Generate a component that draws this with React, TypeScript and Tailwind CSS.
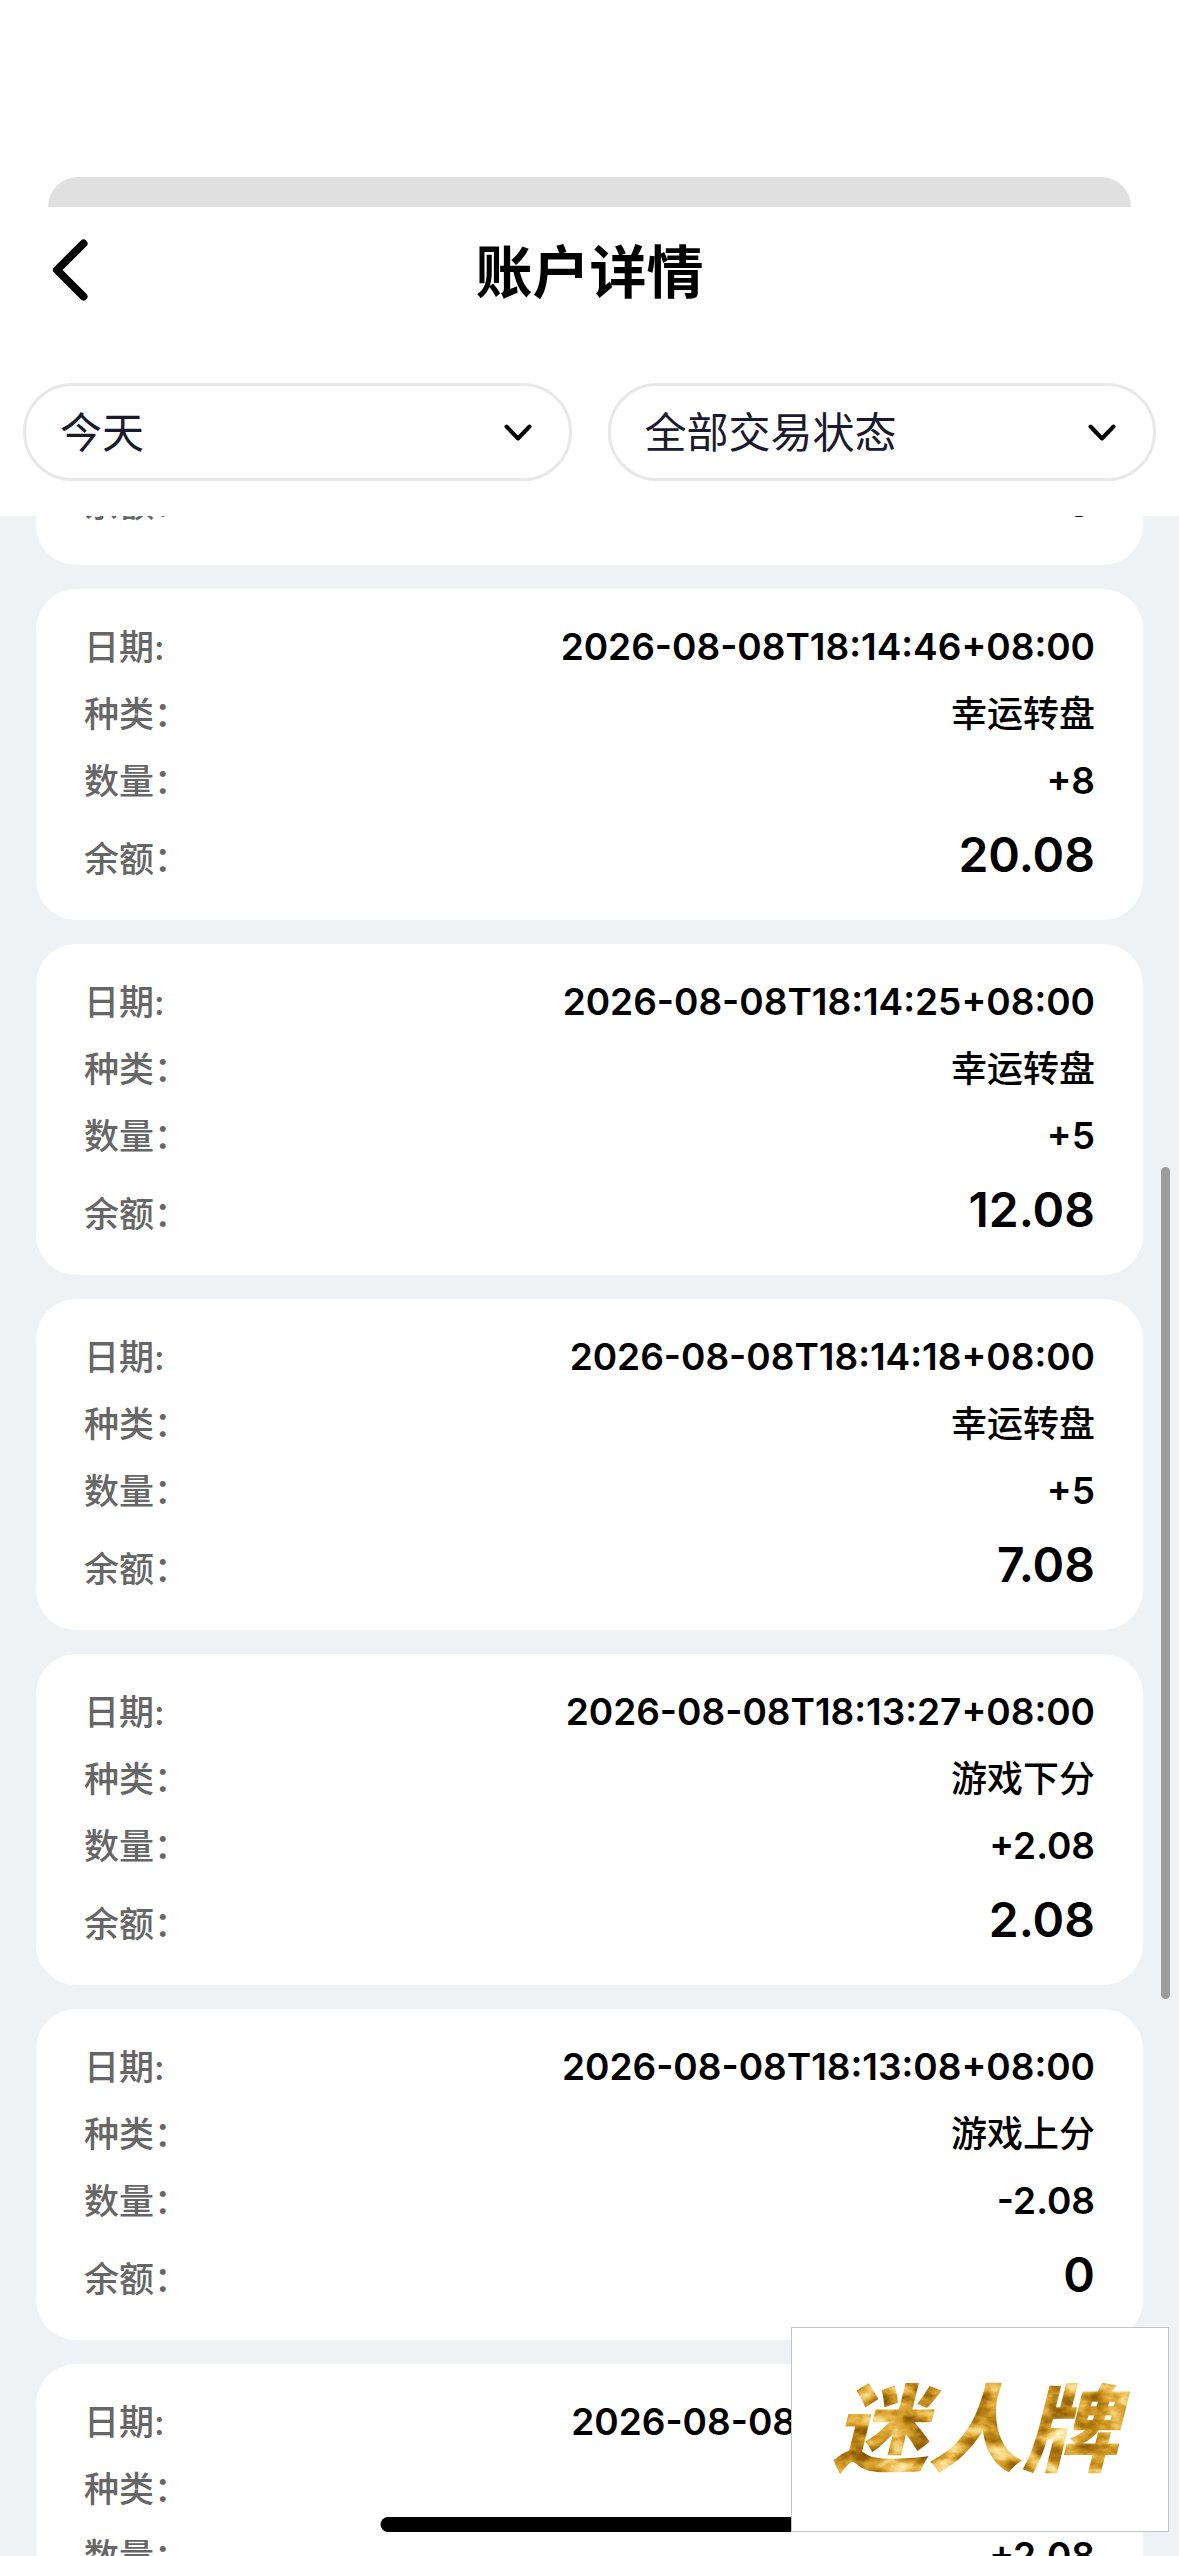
import React, { useLayoutEffect, useRef, useState } from "react";

interface AccountRecord {
  date: string;
  kind: string;
  amount: string;
  balance: string;
}

const records: AccountRecord[] = [
  { date: "2026-08-08T18:15:02+08:00", kind: "游戏上分", amount: "-20.08", balance: "0" },
  { date: "2026-08-08T18:14:46+08:00", kind: "幸运转盘", amount: "+8", balance: "20.08" },
  { date: "2026-08-08T18:14:25+08:00", kind: "幸运转盘", amount: "+5", balance: "12.08" },
  { date: "2026-08-08T18:14:18+08:00", kind: "幸运转盘", amount: "+5", balance: "7.08" },
  { date: "2026-08-08T18:13:27+08:00", kind: "游戏下分", amount: "+2.08", balance: "2.08" },
  { date: "2026-08-08T18:13:08+08:00", kind: "游戏上分", amount: "-2.08", balance: "0" },
  { date: "2026-08-08T18:12:18+08:00", kind: "游戏下分", amount: "+2.08", balance: "2.08" },
];

const INITIAL_SCROLL = 282;

interface FilterSelectProps {
  label: string;
  options: string[];
}

const FilterSelect: React.FC<FilterSelectProps> = ({ label, options }) => {
  const [value, setValue] = useState(options[0]);

  return (
    <div className="relative flex-1">
      <select
        aria-label={label}
        value={value}
        onChange={(e) => setValue(e.target.value)}
        className="block h-[98px] w-full appearance-none rounded-full border-3 border-[#e8e8e8] bg-white px-[34px] text-[42px] font-normal text-[#1a1a2e] focus:outline-none"
      >
        {options.map((option) => (
          <option key={option}>{option}</option>
        ))}
      </select>
      <svg
        viewBox="0 0 28 18"
        className="pointer-events-none absolute top-[41px] right-10 h-[18px] w-7"
        fill="none"
        stroke="#000"
        strokeWidth="4"
        strokeLinecap="round"
        strokeLinejoin="round"
      >
        <path d="M2.5 2.5 14 14.5 25.5 2.5" />
      </svg>
    </div>
  );
};

interface RowProps {
  label: string;
  value: string;
  valueClass?: string;
}

const Row: React.FC<RowProps> = ({
  label,
  value,
  valueClass = "text-[37px] leading-[44px] font-semibold",
}) => (
  <div className="flex items-baseline justify-between">
    <dt className="text-[35px] leading-[44px] font-medium text-[#666]">{label}</dt>
    <dd className={`text-black ${valueClass}`}>{value}</dd>
  </div>
);

const RecordCard: React.FC<{ record: AccountRecord }> = ({ record }) => (
  <li className="rounded-[40px] bg-white px-12 py-9">
    <dl className="flex flex-col gap-[23px]">
      <Row label="日期:" value={record.date} />
      <Row
        label="种类："
        value={record.kind}
        valueClass="text-4xl leading-[44px] font-medium"
      />
      <Row label="数量：" value={record.amount} />
      <Row
        label="余额："
        value={record.balance}
        valueClass="text-5xl leading-[58px] font-semibold"
      />
    </dl>
  </li>
);

export default function App() {
  const listRef = useRef<HTMLUListElement>(null);

  useLayoutEffect(() => {
    if (listRef.current) listRef.current.scrollTop = INITIAL_SCROLL;
  }, []);

  return (
    <div className="relative flex h-screen flex-col overflow-hidden bg-white font-['Inter','Noto_Sans_CJK_SC',sans-serif]">
      {/* 下层页面露出的边缘 */}
      <div className="mx-12 mt-[177px] h-[30px] shrink-0 rounded-t-[30px] bg-[#e0e0e0]" />

      <header className="grid h-[126px] shrink-0 grid-cols-[1fr_auto_1fr] items-center px-12">
        <button type="button" aria-label="返回" className="w-fit p-1">
          <svg
            viewBox="0 0 36 70"
            className="h-[70px] w-9"
            fill="none"
            stroke="#000"
            strokeWidth="8"
            strokeLinecap="round"
            strokeLinejoin="round"
          >
            <path d="M31.5 8.5 5 35 31.5 61.5" />
          </svg>
        </button>
        <h1 className="pt-1.5 text-[57px] font-bold text-black">账户详情</h1>
      </header>

      {/* 筛选 */}
      <div className="flex shrink-0 gap-9 px-[23px] pt-[50px] pb-[35px]">
        <FilterSelect label="日期" options={["今天", "昨天", "近七天", "近三十天"]} />
        <FilterSelect label="交易状态" options={["全部交易状态", "游戏上分", "游戏下分", "幸运转盘"]} />
      </div>

      {/* 记录列表 */}
      <ul
        ref={listRef}
        className="flex min-h-0 flex-1 flex-col gap-6 overflow-y-auto bg-[#eef2f5] px-9 [scrollbar-width:none]"
      >
        {records.map((record) => (
          <RecordCard key={record.date} record={record} />
        ))}
      </ul>

      {/* 滚动条 */}
      <div className="absolute top-[1167px] right-[9px] h-[832px] w-[9px] rounded-full bg-[#9c9c9e]" />

      {/* 底部指示条 */}
      <div className="absolute bottom-6 left-1/2 h-[15px] w-[419px] -translate-x-1/2 rounded-full bg-black" />

      {/* 品牌标识 */}
      <div className="absolute right-2.5 bottom-6 flex h-[205px] w-[378px] items-center justify-center border border-[#c4c4c6] bg-white">
        <svg viewBox="0 0 376 203" className="h-full w-full" role="img" aria-label="迷人牌">
          <defs>
            {/* 金箔纹理 */}
            <filter id="gold" x="0" y="0" width="100%" height="100%" colorInterpolationFilters="sRGB">
              <feTurbulence type="fractalNoise" baseFrequency="0.035 0.06" numOctaves="4" seed="8" />
              <feColorMatrix
                values="1 0 0 0 0
                        1 0 0 0 0
                        1 0 0 0 0
                        0 0 0 0 1"
              />
              <feComponentTransfer result="foil">
                <feFuncR type="table" tableValues="0.5 0.5 0.6 0.76 0.89 0.96 0.99 1" />
                <feFuncG type="table" tableValues="0.3 0.3 0.4 0.54 0.68 0.84 0.93 1" />
                <feFuncB type="table" tableValues="0.02 0.02 0.04 0.1 0.24 0.5 0.72 0.9" />
              </feComponentTransfer>
              <feComposite in="foil" in2="SourceGraphic" operator="in" />
            </filter>
          </defs>
          <text
            x="183"
            y="136"
            textAnchor="middle"
            filter="url(#gold)"
            className="text-[95px] font-black italic"
          >
            迷人牌
          </text>
        </svg>
      </div>
    </div>
  );
}
